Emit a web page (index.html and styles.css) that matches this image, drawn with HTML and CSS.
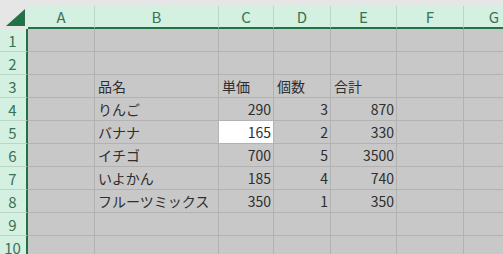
FILE: index.html
```html
<!DOCTYPE html>
<html lang="ja">
<head>
<meta charset="utf-8">
<link rel="stylesheet" href="styles.css">
</head>
<body>
<div class="sheet">
  <div class="topstrip"></div>
  <div class="grid">
    <div class="corner"><svg class="tri" width="19" height="17" viewBox="0 0 19 17"><polygon points="19,0 19,17 0,17" fill="#217346"/></svg></div>
    <div class="ch">A</div><div class="ch">B</div><div class="ch">C</div><div class="ch">D</div><div class="ch">E</div><div class="ch">F</div><div class="ch last">G</div>

    <div class="rh">1</div><div class="c"></div><div class="c"></div><div class="c"></div><div class="c"></div><div class="c"></div><div class="c"></div><div class="c"></div>
    <div class="rh">2</div><div class="c"></div><div class="c"></div><div class="c"></div><div class="c"></div><div class="c"></div><div class="c"></div><div class="c"></div>
    <div class="rh">3</div><div class="c"></div><div class="c t">品名</div><div class="c t">単価</div><div class="c t">個数</div><div class="c t">合計</div><div class="c"></div><div class="c"></div>
    <div class="rh">4</div><div class="c"></div><div class="c t">りんご</div><div class="c n">290</div><div class="c n">3</div><div class="c n">870</div><div class="c"></div><div class="c"></div>
    <div class="rh">5</div><div class="c"></div><div class="c t">バナナ</div><div class="c n sel">165</div><div class="c n">2</div><div class="c n">330</div><div class="c"></div><div class="c"></div>
    <div class="rh">6</div><div class="c"></div><div class="c t">イチゴ</div><div class="c n">700</div><div class="c n">5</div><div class="c n">3500</div><div class="c"></div><div class="c"></div>
    <div class="rh">7</div><div class="c"></div><div class="c t">いよかん</div><div class="c n">185</div><div class="c n">4</div><div class="c n">740</div><div class="c"></div><div class="c"></div>
    <div class="rh">8</div><div class="c"></div><div class="c t">フルーツミックス</div><div class="c n">350</div><div class="c n">1</div><div class="c n">350</div><div class="c"></div><div class="c"></div>
    <div class="rh">9</div><div class="c"></div><div class="c"></div><div class="c"></div><div class="c"></div><div class="c"></div><div class="c"></div><div class="c"></div>
    <div class="rh">10</div><div class="c"></div><div class="c"></div><div class="c"></div><div class="c"></div><div class="c"></div><div class="c"></div><div class="c"></div>
  </div>
</div>
</body>
</html>
```
FILE: styles.css
```css
html, body {
  margin: 0;
  padding: 0;
  overflow: hidden;
  background: #c8c8c8;
}
body {
  font-family: "Noto Sans CJK JP", "Noto Sans", sans-serif;
  width: 503px;
  height: 254px;
}
.sheet {
  width: 503px;
  height: 254px;
  overflow: hidden;
}
.topstrip {
  height: 6px;
  background: #e6e6e6;
}
.grid {
  display: grid;
  grid-template-columns: 28px 67px 124px 55px 57px 66px 67px 60px;
  grid-template-rows: 23px repeat(10, 23px);
}
.corner {
  background: #e6e6e6;
  margin-top: -6px;
  height: 29px;
  box-sizing: border-box;
  position: relative;
}
.tri {
  position: absolute;
  left: 6px;
  top: 9px;
}
.ch {
  background: #d3f0e0;
  border-right: 1px solid #bcd6c6;
  border-bottom: 2px solid #217346;
  color: #3a7255;
  font-size: 15px;
  display: flex;
  align-items: center;
  justify-content: center;
  line-height: 1;
  padding-bottom: 1px;
}
.ch.last { border-right: none; }
.rh {
  background: #d3f0e0;
  border-right: 2px solid #217346;
  border-bottom: 1px solid #bcd6c6;
  color: #3a7255;
  font-size: 15px;
  display: flex;
  align-items: center;
  justify-content: center;
  line-height: 1;
  padding-right: 1px;
}
.c {
  background: #c8c8c8;
  border-right: 1px solid #b2b2b2;
  border-bottom: 1px solid #b2b2b2;
  font-size: 14px;
  color: #2e2e2e;
  display: flex;
  align-items: center;
  line-height: 1;
  white-space: nowrap;
  overflow: visible;
}
.t {
  padding-left: 3px;
}
.n {
  justify-content: flex-end;
  padding-right: 2px;
}
.sel {
  background: #ffffff;
}
```
